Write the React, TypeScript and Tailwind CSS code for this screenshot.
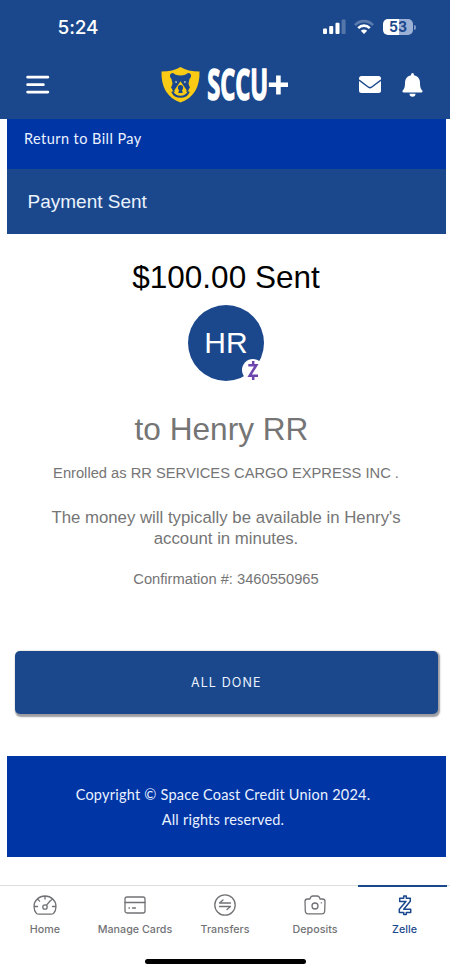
import React from "react";

const HELV = "font-['Liberation_Sans',Arial,sans-serif]";
const NUN = "font-['Lato',sans-serif]";
const INTER = "font-['Inter',sans-serif]";

function StatusBar() {
  return (
    <div className={`flex h-[54px] items-center justify-between pl-[57.5px] pr-[34px] text-white ${INTER}`}>
      <span className="text-[19px] font-medium leading-none tracking-[-0.1px]">5:24</span>
      <div className="flex items-center">
        <svg width="24" height="16" viewBox="0 0 24 16" fill="#fff">
          <rect x="1" y="9.500" width="4" height="5.600" rx="1" />
          <rect x="7.200" y="7" width="4" height="8.100" rx="1" />
          <rect x="13.500" y="3.800" width="4" height="11.300" rx="1" />
          <rect x="19.600" y="0.500" width="4" height="14.600" rx="1" opacity="0.25" />
        </svg>
        <svg className="ml-[8px]" width="20" height="16" viewBox="0 0 20 16" fill="none" stroke="#fff" strokeWidth="2.600">
          <path d="M1 6.200C6 .8 14 .8 19 6.200" opacity="0.28" />
          <path d="M4.200 9.200C7.500 5.800 12.500 5.800 15.800 9.200" />
          <path d="M6.800 11.700C8.700 10 11.300 10 13.200 11.700L10 15z" fill="#fff" stroke="none" />
        </svg>
        <div className="ml-[9px] flex h-[16px] w-[30px] items-center justify-center rounded-[5px] bg-linear-to-r from-white from-52% to-[#9cafd5] to-52% text-[14px] font-bold leading-none text-[#1b488c]">
          53
        </div>
        <div className="ml-px h-[5px] w-[2px] rounded-r bg-[#7f98c5]" />
      </div>
    </div>
  );
}

function Logo() {
  return (
    <svg className="overflow-visible" width="128" height="38" viewBox="0 0 128 38">
      <path d="M19.500 1Q27 5.500 38.500 5.500C39 21 32.500 32 19.500 36.500C6.500 32 0 21 .5 5.500Q12 5.500 19.500 1Z" fill="#f9cb14" />
      <path d="M9.500 8Q12 5.800 14.200 8.600Q19.500 10.400 24.800 8.600Q27 5.800 29.500 8Q31 10.500 28.500 13L27.500 17.500L29 22H10L11.500 17.500L10.500 13Q8 10.500 9.500 8Z" fill="#1b488c" />
      <path d="M14.800 19L10.500 22L12.500 26L26.500 26L28.500 22L24.200 19Z" fill="#1b488c" />
      <path d="M19.500 15.200L25.500 24Q26.500 28 19.500 28.300Q12.500 28 13.500 24Z" fill="#f9cb14" />
      <path d="M11.200 25.500Q13.500 30.800 19.500 30.800Q25.500 30.800 27.800 25.500" fill="none" stroke="#1b488c" strokeWidth="2" />
      <circle cx="19.500" cy="21.700" r="2.600" fill="#1b488c" />
      <path d="M18.500 22.500h2l1.300 4.500h-4.600z" fill="#1b488c" />
      <path d="M14.200 15.800l1.800.4M24.800 15.800l-1.800.4" stroke="#dfe5c0" strokeWidth="1.200" />
      <text x="46.200" y="34.300" fill="#fff" stroke="#fff" strokeWidth="1.500" fontFamily="Open Sans, sans-serif" fontWeight="700" fontSize="42.500" textLength="61" lengthAdjust="spacingAndGlyphs">SCCU</text>
      <path d="M107.800 16.500h7.300v-7h4.600v7h7.300v4.600h-7.300v7.500h-4.600v-7.500h-7.300z" fill="#fff" />
    </svg>
  );
}

function Header() {
  return (
    <header className="h-[118.500px] bg-[#1b488c]">
      <StatusBar />
      <div className="flex h-[61px] items-center pl-[26px] pr-[27px]">
        <svg width="24" height="20" viewBox="0 0 24 20" stroke="#fff" strokeWidth="2.700" strokeLinecap="round">
          <path d="M1.600 2.200h20.300M1.600 9.700h15.800M1.600 17.100h20.300" />
        </svg>
        <div className="ml-[111px]"><Logo /></div>
        <svg className="ml-[70px]" width="22" height="17" viewBox="0 0 22 17">
          <rect width="22" height="17" rx="2.500" fill="#fff" />
          <path d="M0 4L9.500 11.200Q11 12.200 12.500 11.200L22 4" fill="none" stroke="#1b488c" strokeWidth="1.400" />
        </svg>
        <svg className="ml-[21px]" width="21" height="24" viewBox="0 0 21 24" fill="#fff">
          <path d="M10.500 0Q12 0 12 2.200C16 3 18 6 18 10C18 14.500 19 16 20.500 17.800Q21 19.400 19.500 19.400H1.500Q0 19.400.5 17.800C2 16 3 14.500 3 10C3 6 5 3 9 2.200Q9 0 10.500 0Z" />
          <path d="M7.500 20.700h6a3 3 0 0 1-6 0z" />
        </svg>
      </div>
    </header>
  );
}

function ZelleMark({ className }: { className: string }) {
  return (
    <svg className={className} viewBox="0 0 12 19" fill="none" stroke="#6c45ae" strokeWidth="2.500">
      <path d="M1.300 4.200H9.300L2.700 14.700H11M6.200 0V4M6.200 15V19" />
    </svg>
  );
}

function Tab({ label, active, children }: { label: string; active?: boolean; children: React.ReactNode }) {
  return (
    <div className={`flex shrink-0 flex-col items-center border-t-2 pt-[6px] ${active ? "-ml-[2px] w-[89px] border-[#1b488c] pl-[4px] text-[#1b488c]" : "w-[90px] border-transparent text-[#717275]"}`}>
      <svg width="24" height="24" viewBox="0 0 24 24" fill="none" stroke="currentColor" strokeWidth="1.300" strokeLinecap="round" strokeLinejoin="round">
        {children}
      </svg>
      <span className="mt-[6px] whitespace-nowrap text-[10.700px] font-medium leading-[14px] tracking-[0.020px]">{label}</span>
    </div>
  );
}

export default function App() {
  return (
    <div className="flex h-[973px] w-[450px] flex-col overflow-hidden bg-white">
      <Header />
      <main className={`ml-[6.500px] mr-[4.500px] flex flex-col ${HELV}`}>
        <div className={`h-[50px] bg-[#0035a6] pl-[17.500px] pt-[10px] text-[14.500px] leading-[20px] tracking-[0.430px] text-[#eaf2ff] ${NUN}`}>Return to Bill Pay</div>
        <div className="flex h-[65.500px] items-center bg-[#1b488c] pl-[21px] pt-[2px] text-[19px] text-[#eaf2ff]">Payment Sent</div>
        <div className="flex h-[522px] flex-col items-center text-center text-[#757575]">
          <h1 className="mt-[25px] text-[31.500px] leading-[36px] text-black">$100.00 Sent</h1>
          <div className="relative mt-[10px] flex size-[76px] items-center justify-center rounded-full bg-[#1b488c] pb-[2px] text-[30px] text-white">
            HR
            <div className="absolute right-0 bottom-0 flex size-[22px] items-center justify-center rounded-full bg-white">
              <ZelleMark className="h-[19px] w-[12px]" />
            </div>
          </div>
          <h2 className="mr-[9px] mt-[30px] text-[31.600px] leading-[36px]">to Henry RR</h2>
          <p className="mt-[16px] whitespace-nowrap text-[14.700px] leading-[20px]">Enrolled as RR SERVICES CARGO EXPRESS INC .</p>
          <p className="mt-[24px] w-[360px] text-[16.800px] leading-[21px]">The money will typically be available in Henry's account in minutes.</p>
          <p className="mt-[20px] text-[14.700px] leading-[20px]">Confirmation #: 3460550965</p>
          <button className={`ml-[8.500px] mt-auto mb-[42px] h-[63px] w-[422.500px] self-start rounded-[5px] bg-[#1b488c] pt-[2px] text-[12.500px] tracking-[1.100px] text-[#eaf2ff] shadow-[1px_1.500px_1.500px_1px_rgba(90,90,100,0.6)] ${INTER}`}>ALL DONE</button>
        </div>
        <footer className={`flex h-[101px] flex-col items-center justify-center bg-[#0035a6] pr-[6px] text-[14.500px] leading-[25px] tracking-[0.220px] text-[#eaf2ff] ${NUN}`}>
          <p>Copyright © Space Coast Credit Union 2024.</p>
          <p>All rights reserved.</p>
        </footer>
      </main>
      <nav className={`mt-[28px] flex h-[60px] shadow-[inset_0_1px_0_#dedede] ${INTER}`}>
        <Tab label="Home">
          <path d="M3.500 20.500Q1 18 1 13.500A11 10.500 0 0 1 23 13.500Q23 18 20.500 20.500Q19.500 21.200 18 21.200H6Q4.500 21.200 3.500 20.500ZM12 3v3M5 6.500l1.600 1.600M1.500 13.500h3M19.500 13.500h3M13.500 12.200L17.500 7.500M19 6.500l-.6.6" />
          <circle cx="12" cy="14" r="2.200" />
        </Tab>
        <Tab label="Manage Cards">
          <rect x="2" y="4" width="20" height="16" rx="2" />
          <path d="M2 9.500h20M6 15h.5M9.500 15h3" />
        </Tab>
        <Tab label="Transfers">
          <circle cx="12" cy="12" r="10.200" />
          <path d="M17.500 10H6.500L10 7M6.500 13.500H17.500L14 16.500" />
        </Tab>
        <Tab label="Deposits">
          <path d="M4.500 6H7Q7.500 3 10 3h4q2.500 0 3 3h2.500Q22 6 22 8.500L21.700 18Q21.500 20.800 19 20.800H5Q2.500 20.800 2.300 18L2 8.500Q2 6 4.500 6Z" />
          <circle cx="12" cy="13" r="3" />
          <path d="M18.200 9.800h.4" />
        </Tab>
        <Tab label="Zelle" active>
          <path strokeWidth="1.500" d="M10.700 3h2.600v2.200H17.300V8.200L10.700 16.200H17.700V19.400H13.300V21.500H10.700V19.400H6.300V16.300L12.900 8.400H6.700V5.200H10.700z" />
        </Tab>
      </nav>
      <div className="mx-auto mt-[14px] h-[5px] w-[161px] rounded-full bg-black" />
    </div>
  );
}
